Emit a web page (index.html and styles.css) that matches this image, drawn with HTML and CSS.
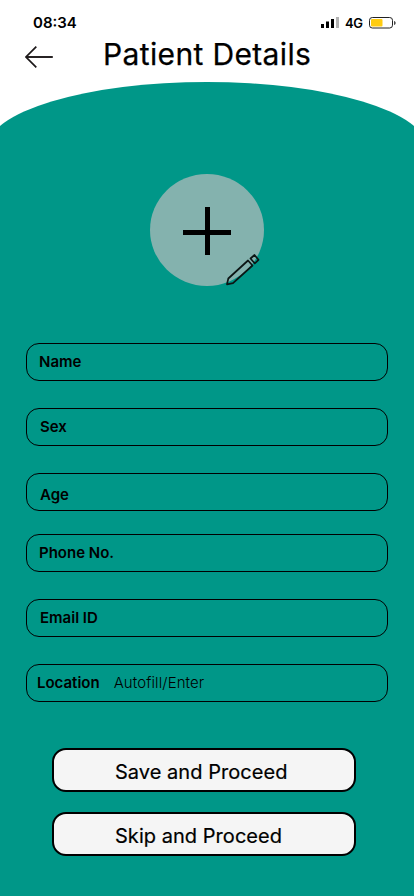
FILE: index.html
```html
<!DOCTYPE html>
<html lang="en">
<head>
<meta charset="utf-8">
<title>Patient Details</title>
<link rel="stylesheet" href="styles.css">
</head>
<body>
<div class="screen">
  <div class="status">
    <span class="time">08:34</span>
    <svg class="signal" width="18" height="12" viewBox="0 0 18 12"><path d="M0 8h3v4H0zM5 5.500h3V12H5zM10 3h3v9h-3z" fill="#000"/><path d="M15 1h3v11h-3z" fill="#b3b3b3"/></svg>
    <span class="network">4G</span>
    <svg class="battery" width="28" height="12" viewBox="0 0 28 12"><rect x=".5" y=".5" width="23" height="10.500" rx="2.800" fill="none" stroke="#222"/><rect x="2" y="2" width="11.500" height="7.500" rx="1" fill="#fc1"/><path d="M25.200 4v4c1.800-.5 1.800-3.500 0-4z" fill="#222"/></svg>
  </div>
  <header class="header">
    <svg class="back" width="28" height="22" viewBox="0 0 28 22" fill="none" stroke="#1c1819"><path d="M1 11H27.800" stroke-width="1.900"/><path d="M11.300 .7L1 11L11.300 21.300" stroke-width="1.700"/></svg>
    <h1 class="title">Patient Details</h1>
  </header>
  <main class="panel">
    <svg class="curve" width="414" height="46" viewBox="0 0 414 46"><ellipse cx="207" cy="66.500" rx="220" ry="66.500" fill="#009788"/></svg>
    <div class="avatar">
      <svg class="plus" width="48" height="48" viewBox="0 0 48 48"><path d="M22 0h5v48h-5zM0 23h48v5H0z"/></svg>
      <svg class="pencil" width="36" height="34" viewBox="0 0 36 34" fill="none" stroke="#0c1514" stroke-width="1.700" stroke-linejoin="round"><path d="M2 31.300L3.300 25.500L23 7.500L27.500 12.500L8 30.200Z"/><path d="M25.500 5.500L29.500 2L33.500 6.800L29.800 10.500Z"/></svg>
    </div>
    <form class="fields">
      <label class="field"><span>Name</span></label>
      <label class="field inset"><span>Sex</span></label>
      <label class="field inset low"><span>Age</span></label>
      <label class="field close"><span>Phone No.</span></label>
      <label class="field inset"><span>Email ID</span></label>
      <label class="field outset"><span>Location</span><span class="hint">Autofill/Enter</span></label>
    </form>
    <div class="actions">
      <button class="action">Save and Proceed</button>
      <button class="action">Skip and Proceed</button>
    </div>
  </main>
</div>
</body>
</html>
```
FILE: styles.css
```css
* { box-sizing: border-box; }
body { margin: 0; background: #fff; color: #000; font-family: Inter, sans-serif; }
svg { display: block; }
.screen { width: 414px; height: 896px; display: flex; flex-direction: column; overflow: hidden; }
.status { height: 36px; padding: 9px 17px 0 33px; display: flex; align-items: flex-start; }
.time { font-size: 15px; line-height: 27px; font-weight: 600; flex: 1; }
.signal { margin-top: 7px; }
.network { width: 18px; font-size: 13px; line-height: 28px; font-weight: 600; letter-spacing: -.5px; margin: 0 6px; }
.battery { margin-top: 8px; }
.header { height: 46px; padding-left: 25px; display: flex; align-items: flex-start; }
.back { margin-top: 10px; }
.title { margin: 0 0 0 50px; font-size: 30px; line-height: 36px; font-weight: 400; letter-spacing: .36px; -webkit-text-stroke: .25px #000; white-space: nowrap; }
.panel { flex: 1; display: flex; flex-direction: column; background: linear-gradient(#fff 45px, #009788 45px); }
.avatar { position: relative; width: 114px; height: 112px; margin: 46px 0 0 150px; border-radius: 50%; background: #84b2ae; padding: 33px; }
.pencil { position: absolute; left: 75px; top: 79px; }
.fields { margin: 57px 26px 0; display: flex; flex-direction: column; gap: 27px; }
.field { height: 38px; padding-left: 12px; border: 1px solid #000; border-radius: 13px; display: flex; font-size: 15px; line-height: 36px; font-weight: 600; }
.inset { padding-left: 13px; }
.outset { padding-left: 10px; }
.low { padding-top: 3px; }
.close { margin-top: -4px; }
.hint { margin-left: 14px; font-weight: 300; letter-spacing: .1px; }
.actions { margin: 46px 58px 0 52px; display: flex; flex-direction: column; gap: 20px; }
.action { height: 44px; padding: 3px 0 0 61px; border: 2px solid #000; border-radius: 14px; background: #f5f5f5; color: #000; font: 400 20px/36px Inter, sans-serif; letter-spacing: .04px; -webkit-text-stroke: .2px #000; text-align: left; }
```
